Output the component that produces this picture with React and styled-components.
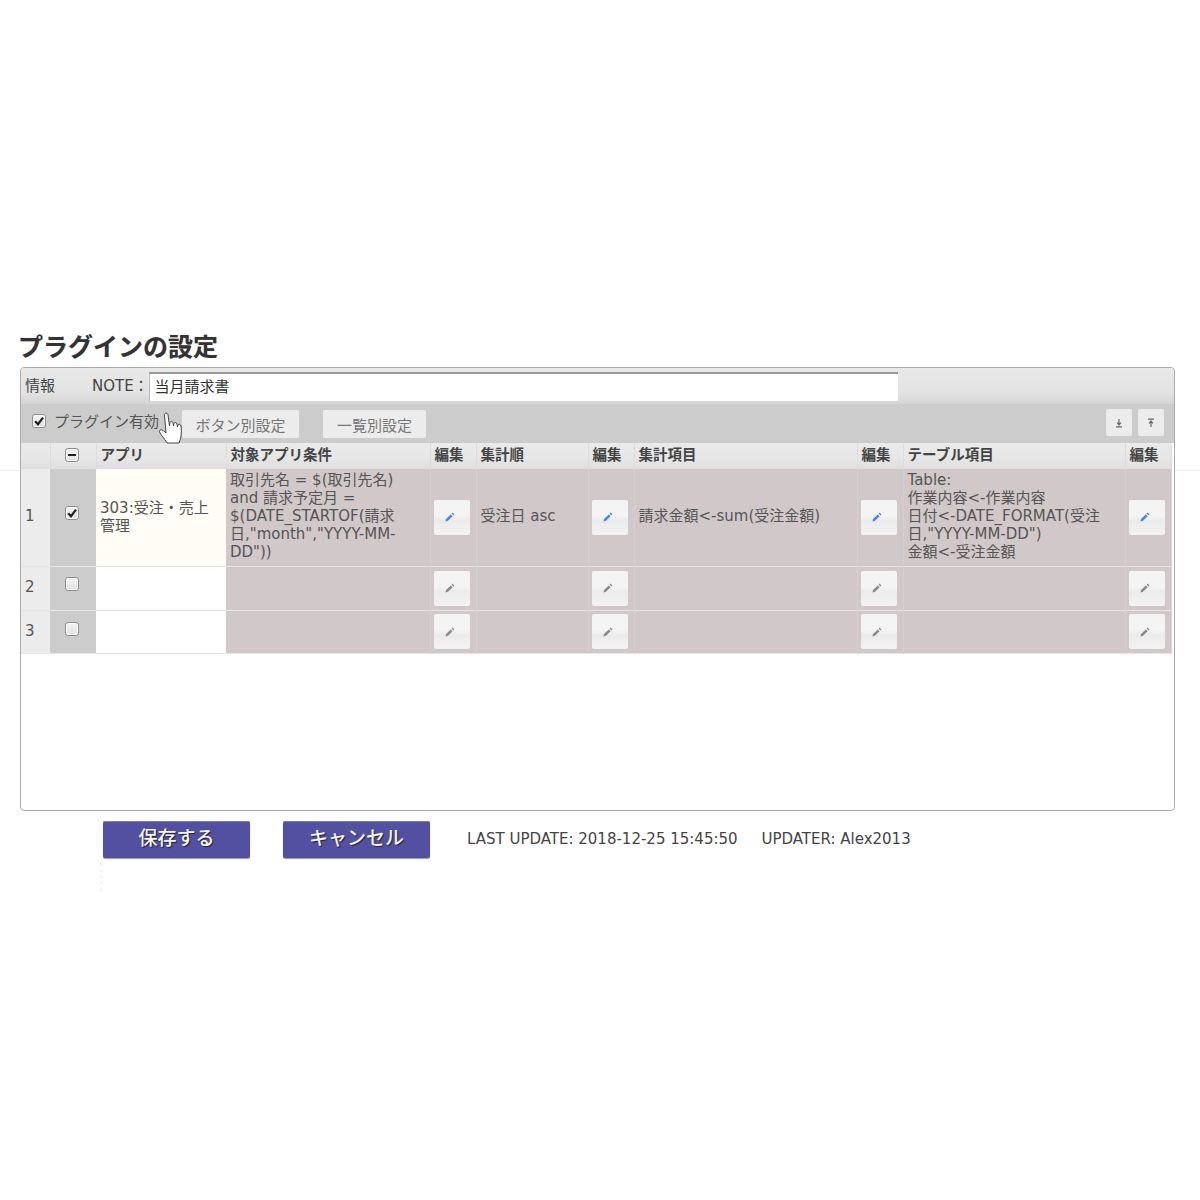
import styled, { createGlobalStyle } from 'styled-components'

const GlobalStyle = createGlobalStyle`
  html, body { margin: 0; padding: 0; background: #fff; }
  body {
    font-family: "DejaVu Sans", "Noto Sans CJK JP", sans-serif;
    color: #444;
  }
`

const Page = styled.div`
  position: relative;
  height: 1200px;
  padding: 329px 25px 0 20px;
  box-sizing: border-box;
`
const FaintLine = styled.div`
  position: absolute;
  left: 0;
  right: 0;
  top: 470px;
  height: 1px;
  background: #f0f0f0;
`
const Title = styled.h1`
  margin: 0 0 0 -2px;
  font-size: 25px;
  line-height: 32px;
  height: 38px;
  font-weight: 700;
  color: #333;
  font-family: "Noto Sans CJK JP", sans-serif;
  text-shadow: 0 0 1px rgba(0, 0, 0, .3);
`
const Panel = styled.div`
  position: relative;
  height: 444px;
  box-sizing: border-box;
  border: 1px solid #aaa;
  border-radius: 4px;
  background: #fff;
  overflow: hidden;
  z-index: 1;
`
const InfoRow = styled.div`
  height: 36px;
  display: flex;
  align-items: center;
  padding-left: 4px;
  background: linear-gradient(#e9e9e9, #e2e2e2 70%, #d4d4d4);
  font-size: 15px;
  line-height: 18px;
  color: #444;
`
const InfoLabel = styled.span`
  width: 67px;
  margin-top: -1px;
`
const NoteLabel = styled.span`
  margin-top: -1px;
`
const NoteInput = styled.input`
  box-sizing: border-box;
  width: 750px;
  height: 29px;
  margin-left: auto;
  margin-right: 276px;
  padding: 0 5px 3px;
  border: 0;
  border-top: 2px solid #999;
  border-left: 1px solid #bbb;
  background: #fff;
  font: inherit;
  color: #333;
  outline: none;
`
const ToolBar = styled.div`
  height: 39px;
  display: flex;
  align-items: center;
  background: #ccc;
  padding: 0 10px 0 11px;
  font-size: 15px;
`
const CheckLabel = styled.label`
  display: flex;
  align-items: center;
  gap: 8px;
  width: 150px;
  color: #555;
  white-space: nowrap;
  margin-top: -6px;
`
const TabButton = styled.button`
  height: 28px;
  padding: 0;
  width: ${p => p.$width}px;
  margin-right: ${p => p.$gap}px;
  margin-top: 1px;
  border: 0;
  border-radius: 2px;
  background: #ececec;
  color: #777;
  font: inherit;
`
const Spacer = styled.div`
  flex: 1;
`
const MoveButton = styled.button`
  width: 26px;
  height: 27px;
  margin-left: 6px;
  margin-top: -2px;
  padding: 0;
  border: 0;
  border-radius: 2px;
  background: #ececec;
  display: flex;
  align-items: center;
  justify-content: center;
`
const Grid = styled.table`
  width: 1150px;
  table-layout: fixed;
  border-collapse: collapse;
  font-size: 15px;
  line-height: 18px;
`
const HeadCell = styled.th`
  height: 26px;
  padding: 0 0 5px 4px;
  box-sizing: border-box;
  text-align: ${p => (p.$center ? 'center' : 'left')};
  background: linear-gradient(#eaeaea, #e6e6e6 60%, #dedede);
  border-right: 1px solid #dcdcdc;
  color: #444;
  font-size: 14.5px;
  font-weight: 700;
  white-space: nowrap;
  font-family: "Noto Sans CJK JP", sans-serif;
`
const HeadCheckCell = styled(HeadCell)`
  padding: 0 2px 7px 0;
`
const BodyRow = styled.tr`
  height: ${p => p.$height}px;
  border-bottom: 1px solid #e8e4e4;
`
const NumCell = styled.td`
  background: #ececec;
  padding: 0 0 2px 4px;
  color: #555;
`
const CheckCell = styled.td`
  background: #ccc;
  text-align: center;
  padding: 0 2px ${p => p.$bottom}px 0;
`
const AppCell = styled.td`
  background: ${p => (p.$filled ? '#fffdf6' : '#fff')};
  padding: 0 10px 0 4px;
  color: #555;
`
const DataCell = styled.td`
  background: #d1c9c9;
  padding: 0 ${p => p.$right || 5}px 2px 4px;
  color: #555;
  vertical-align: middle;
  border-right: 1px solid #d7d0d0;
`
const EditCell = styled(DataCell)`
  padding: 0 0 0 3px;
  text-align: left;
`
const EditButton = styled.button`
  width: 36px;
  height: 35px;
  padding: 0 3px 0 0;
  border: 0;
  border-radius: 2px;
  background: linear-gradient(#f4f4f4, #f4f4f4 45%, #ebebeb 60%, #f3f3f3);
  display: inline-flex;
  align-items: center;
  justify-content: center;
  vertical-align: middle;
`
const Box = styled.span`
  display: inline-block;
  box-sizing: border-box;
  width: 14px;
  height: 14px;
  border: 1px solid #8f8f8f;
  border-radius: 3px;
  background: linear-gradient(#f4f4f4, #e2e2e2);
  vertical-align: middle;
  position: relative;
  box-shadow: inset 0 0 0 1px #fff;
`
const Footer = styled.div`
  display: flex;
  align-items: center;
  margin-top: 10px;
  padding-left: 83px;
  font-size: 15px;
  color: #444;
`
const ActionButton = styled.button`
  box-sizing: border-box;
  width: 147px;
  height: 37px;
  margin-right: 33px;
  padding: 0 0 6px;
  border: 0;
  border-radius: 2px;
  background: #5350a2;
  box-shadow: inset 0 1px 0 #7c7ac0, 0 1px 1px rgba(0,0,0,.4);
  color: #f4f4f4;
  font: inherit;
  font-size: 19px;
  font-weight: 500;
  text-shadow: 1px 1px 1px #222;
`
const UpdateInfo = styled.span`
  margin: -2px 0 0 4px;
  white-space: pre;
`
const Dotted = styled.div`
  position: absolute;
  left: 100px;
  top: 862px;
  height: 30px;
  border-left: 3px dotted #f6f6f6;
`
const Cursor = styled.svg`
  position: absolute;
  left: 158px;
  top: 412px;
  z-index: 2;
`

const Pencil = ({ active }) => (
  <svg width="12" height="12" viewBox="0 0 12 12">
    <path
      d="M1.5 10.5 L2 8 L6.8 3.4 L8.6 5.2 L4 9.8 Z M7.6 2.6 L8.6 1.6 L10.4 3.4 L9.4 4.4 Z"
      fill={active ? '#4a86e0' : '#8a8a8a'}
    />
  </svg>
)

const Tick = () => (
  <svg width="14" height="14" viewBox="0 0 14 14" style={{ position: 'absolute', left: -1, top: -1 }}>
    <path d="M3.2 7.2 L6 10.2 L11 3.6" fill="none" stroke="#222" strokeWidth="2.2" />
  </svg>
)

const Check = ({ checked, minus }) => (
  <Box>
    {checked && <Tick />}
    {minus && (
      <svg width="14" height="14" viewBox="0 0 14 14" style={{ position: 'absolute', left: -1, top: -1 }}>
        <rect x="3" y="6" width="8" height="2" fill="#222" />
      </svg>
    )}
  </Box>
)

const rows = [
  {
    no: 1,
    height: 97,
    app: '303:受注・売上管理',
    cond: '取引先名 = $(取引先名) and 請求予定月 = $(DATE_STARTOF(請求日,"month","YYYY-MM-DD"))',
    order: '受注日 asc',
    item: '請求金額<-sum(受注金額)',
    table: ['Table:', '作業内容<-作業内容', '日付<-DATE_FORMAT(受注日,"YYYY-MM-DD")', '金額<-受注金額'],
  },
  { no: 2, height: 44 },
  { no: 3, height: 43 },
]

const widths = [29, 46, 130, 204, 46, 112, 46, 223, 46, 222, 46]

export default function App() {
  return (
    <Page>
      <GlobalStyle />
      <FaintLine />
      <Title>プラグインの設定</Title>
      <Panel>
        <InfoRow>
          <InfoLabel>情報</InfoLabel>
          <NoteLabel>NOTE：</NoteLabel>
          <NoteInput defaultValue="当月請求書" />
        </InfoRow>
        <ToolBar>
          <CheckLabel>
            <Check checked />
            プラグイン有効
          </CheckLabel>
          <TabButton $width={117} $gap={24}>ボタン別設定</TabButton>
          <TabButton $width={103} $gap={0}>一覧別設定</TabButton>
          <Spacer />
          <MoveButton>
            <svg width="10" height="10" viewBox="0 0 10 10">
              <path d="M5 1 V6 M3 4.5 L5 7 L7 4.5 M2 8.8 H8" stroke="#666" strokeWidth="1.2" fill="none" />
            </svg>
          </MoveButton>
          <MoveButton>
            <svg width="10" height="10" viewBox="0 0 10 10">
              <path d="M5 9 V4 M3 5.5 L5 3 L7 5.5 M2 1.2 H8" stroke="#666" strokeWidth="1.2" fill="none" />
            </svg>
          </MoveButton>
        </ToolBar>
        <Grid>
          <colgroup>
            {widths.map((w, i) => <col key={i} width={w} />)}
          </colgroup>
          <thead>
            <tr>
              <HeadCell />
              <HeadCheckCell $center><Check minus /></HeadCheckCell>
              <HeadCell>アプリ</HeadCell>
              <HeadCell>対象アプリ条件</HeadCell>
              <HeadCell>編集</HeadCell>
              <HeadCell>集計順</HeadCell>
              <HeadCell>編集</HeadCell>
              <HeadCell>集計項目</HeadCell>
              <HeadCell>編集</HeadCell>
              <HeadCell>テーブル項目</HeadCell>
              <HeadCell>編集</HeadCell>
            </tr>
          </thead>
          <tbody>
            {rows.map(r => (
              <BodyRow key={r.no} $height={r.height}>
                <NumCell>{r.no}</NumCell>
                <CheckCell $bottom={r.no === 3 ? 6 : 9}><Check checked={r.no === 1} /></CheckCell>
                <AppCell $filled={!!r.app}>{r.app}</AppCell>
                <DataCell $right={20}>{r.cond}</DataCell>
                <EditCell><EditButton><Pencil active={r.no === 1} /></EditButton></EditCell>
                <DataCell>{r.order}</DataCell>
                <EditCell><EditButton><Pencil active={r.no === 1} /></EditButton></EditCell>
                <DataCell>{r.item}</DataCell>
                <EditCell><EditButton><Pencil active={r.no === 1} /></EditButton></EditCell>
                <DataCell>
                  {r.table && r.table.map(t => <div key={t}>{t}</div>)}
                </DataCell>
                <EditCell><EditButton><Pencil active={r.no === 1} /></EditButton></EditCell>
              </BodyRow>
            ))}
          </tbody>
        </Grid>
      </Panel>
      <Footer>
        <ActionButton>保存する</ActionButton>
        <ActionButton>キャンセル</ActionButton>
        <UpdateInfo>LAST UPDATE: 2018-12-25 15:45:50     UPDATER: Alex2013</UpdateInfo>
      </Footer>
      <Dotted />
      <Cursor width="28" height="34" viewBox="0 0 28 34">
        <path
          d="M9 31 C7 27 1 21 1.5 19 C2.5 16.5 5 18 8 21 L6.5 3 C6.5 0.5 9.8 0.5 10 3 L11.5 14 L12 10.5 C12.5 8.8 14.8 9 15 10.8 L15.5 14 L16 11.5 C16.5 10 18.8 10.2 19 12 L19.5 15 L20 13 C20.5 11.8 22.7 12 23 14 C23.8 20 23.5 26 21 31 Z"
          fill="#fff"
          stroke="#444"
          strokeWidth="1"
        />
      </Cursor>
    </Page>
  )
}
